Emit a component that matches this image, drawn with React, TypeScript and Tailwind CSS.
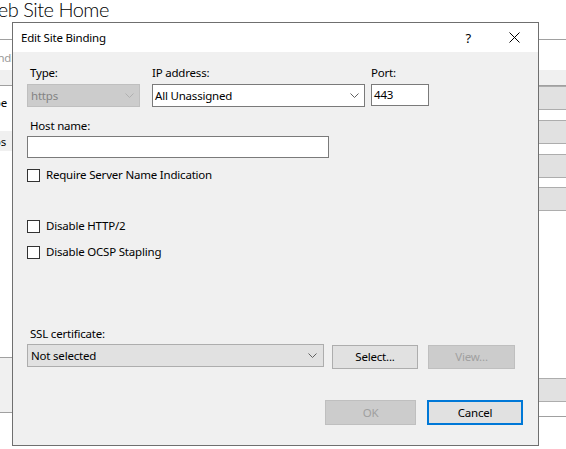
import React from "react";

function Chevron({ color = "#606060" }: { color?: string }) {
  return (
    <svg width="9" height="5" viewBox="0 0 9 5" className="shrink-0">
      <polyline points="0.5,0.5 4.5,4.5 8.5,0.5" fill="none" stroke={color} strokeWidth="1" />
    </svg>
  );
}

function Checkbox({ label, className = "" }: { label: string; className?: string }) {
  return (
    <label className={`flex items-center h-[16px] ${className}`}>
      <span className="w-[13px] h-[13px] border border-[#333333] bg-white shrink-0" />
      <span className="ml-[6px] text-black">{label}</span>
    </label>
  );
}

function SideButton({ text, className = "" }: { text: string; className?: string }) {
  return (
    <div className={`h-[24px] bg-[#e1e1e1] border-y border-[#adadad] flex items-center pl-[1px] ${className}`}>
      {text}
    </div>
  );
}

export default function App() {
  return (
    <div className="relative w-[566px] h-[449px] overflow-hidden bg-white text-[11.5px] tracking-[-0.2px] leading-[16px] font-['Segoe_UI','Noto_Sans',sans-serif] text-black">
      {/* page behind the dialog */}
      <div className="h-[42px] border-b border-[#a0a0a0]">
        <div className="ml-[-21px] mt-[-2px] text-[20px] leading-[22px] tracking-[-0.5px] font-light font-['Lato',sans-serif]">
          Web Site Home
        </div>
      </div>
      <div className="flex justify-between">
        <div className="w-[60px] flex flex-col">
          <div className="h-[30px] flex items-center justify-end pr-[46px] pt-[5px] text-[#9a9a9a]">Bindi</div>
          <div className="h-[16px] bg-[#f0f0f0] border-b border-[#a0a0a0]" />
          <div className="h-[30px] flex items-center justify-end pr-[53px] pt-[4px]">Type</div>
          <div className="h-[15px]" />
          <div className="h-[20px] bg-[#f0f0f0] flex items-center justify-end pr-[54px] pt-[2px]">https</div>
          <div className="h-[206px]" />
          <div className="h-[56px] bg-[#f0f0f0] border-y border-[#a0a0a0]" />
        </div>
        <div className="w-[40px] flex flex-col">
          <div className="h-[30px]" />
          <div className="h-[16px] bg-[#f0f0f0] border-b border-[#a0a0a0]" />
          <SideButton text="Add..." className="ml-[-22px]" />
          <SideButton text="Edit..." className="mt-[10px] ml-[-20px]" />
          <SideButton text="Remove" className="mt-[10px] ml-[-33px]" />
          <SideButton text="Browse" className="mt-[9px] ml-[-32px]" />
          <SideButton text="Close" className="mt-[167px] ml-[-23px]" />
          <div className="h-[15px] border-b border-[#a0a0a0]" />
        </div>
      </div>

      {/* dialog */}
      <div className="absolute left-[12px] top-[22px] w-[527px] h-[424px] border border-[#6f6f6f] bg-[#f0f0f0] flex flex-col">
        <div className="h-[29px] bg-white flex items-center shrink-0">
          <span className="ml-[8px] flex-1">Edit Site Binding</span>
          <span className="text-[13px] mr-[38px]">?</span>
          <svg width="11" height="11" viewBox="0 0 11 11" className="mr-[18px]">
            <path d="M0.5 0.5 L10.5 10.5 M10.5 0.5 L0.5 10.5" stroke="#000" strokeWidth="1" />
          </svg>
        </div>

        <div className="pl-[14px] flex flex-col">
          <div className="flex mt-[13px]">
            <div className="flex flex-col w-[113px]">
              <span className="pl-[3px]">Type:</span>
              <div className="mt-[3px] h-[23px] bg-[#cccccc] border border-[#bfbfbf] flex items-center pl-[3px] pr-[5px] text-[#838383]">
                <span className="flex-1">https</span>
                <Chevron color="#b0b0b0" />
              </div>
            </div>
            <div className="flex flex-col w-[213px] ml-[12px]">
              <span>IP address:</span>
              <div className="mt-[3px] h-[23px] bg-white border border-[#7a7a7a] flex items-center pl-[2px] pr-[5px]">
                <span className="flex-1">All Unassigned</span>
                <Chevron />
              </div>
            </div>
            <div className="flex flex-col w-[58px] ml-[6px]">
              <span>Port:</span>
              <div className="mt-[3px] h-[22px] bg-white border border-[#7a7a7a] flex items-center pl-[2px]">443</div>
            </div>
          </div>

          <span className="pl-[3px] mt-[11px]">Host name:</span>
          <div className="mt-[2px] w-[302px] h-[22px] bg-white border border-[#7a7a7a]" />

          <Checkbox label="Require Server Name Indication" className="mt-[9px]" />
          <Checkbox label="Disable HTTP/2" className="mt-[35px]" />
          <Checkbox label="Disable OCSP Stapling" className="mt-[10px]" />

          <span className="pl-[3px] mt-[66px]">SSL certificate:</span>
          <div className="mt-[2px] flex items-start h-[25px]">
            <div className="w-[297px] h-[23px] bg-[#e1e1e1] border border-[#adadad] flex items-center pl-[3px] pr-[6px]">
              <span className="flex-1">Not selected</span>
              <Chevron />
            </div>
            <button className="ml-[8px] mt-[1px] w-[86px] h-[24px] bg-[#e1e1e1] border border-[#adadad] flex items-center justify-center">
              Select...
            </button>
            <button className="ml-[10px] mt-[1px] w-[87px] h-[24px] bg-[#cccccc] border border-[#bfbfbf] flex items-center justify-center text-[#a0a0a0]">
              View...
            </button>
          </div>

          <div className="mt-[31px] flex">
            <button className="ml-[298px] w-[91px] h-[25px] bg-[#cccccc] border border-[#bfbfbf] flex items-center justify-center text-[#a0a0a0]">
              OK
            </button>
            <button className="ml-[11px] w-[96px] h-[25px] bg-[#e1e1e1] border-2 border-[#0078d7] flex items-center justify-center">
              Cancel
            </button>
          </div>
        </div>
      </div>
    </div>
  );
}
